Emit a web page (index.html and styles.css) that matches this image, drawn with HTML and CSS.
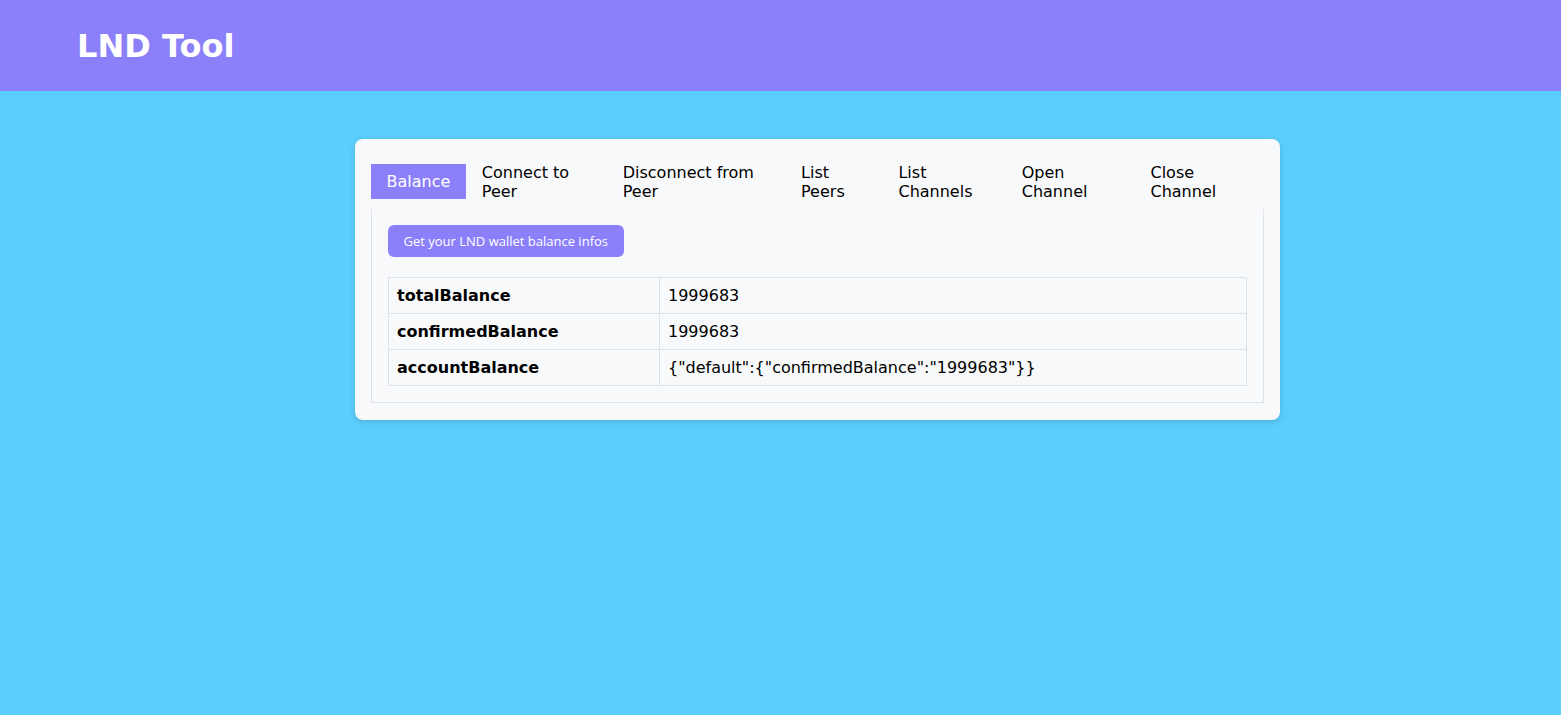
FILE: index.html
```html
<!DOCTYPE html>
<html>
<head>
<meta charset="utf-8">
<link rel="stylesheet" href="styles.css">
</head>
<body>
<header class="topbar"><h1 class="brand">LND Tool</h1></header>
<main class="page">
  <section class="card">
    <ul class="tabs">
      <li class="tab active">Balance</li>
      <li class="tab">Connect to Peer</li>
      <li class="tab">Disconnect from Peer</li>
      <li class="tab">List Peers</li>
      <li class="tab">List Channels</li>
      <li class="tab">Open Channel</li>
      <li class="tab">Close Channel</li>
    </ul>
    <div class="panel">
      <button class="btn">Get your LND wallet balance infos</button>
      <table class="info">
        <colgroup><col class="c-key"><col></colgroup>
        <tr><th>totalBalance</th><td>1999683</td></tr>
        <tr><th>confirmedBalance</th><td>1999683</td></tr>
        <tr><th>accountBalance</th><td>{"default":{"confirmedBalance":"1999683"}}</td></tr>
      </table>
    </div>
  </section>
</main>
</body>
</html>
```
FILE: styles.css
```css
* { box-sizing: border-box; }
html, body { margin: 0; padding: 0; }
body {
  background: #5bcefe;
  font-family: "DejaVu Sans", sans-serif;
  color: #000;
  min-height: 715px;
}
.topbar {
  background: #8c80fa;
  height: 91px;
  display: flex;
  align-items: center;
  padding-left: 77px;
}
.brand {
  margin: 0;
  color: #fff;
  font-size: 32px;
  font-weight: bold;
}
.page {
  padding: 48px 0 0 355px;
}
.card {
  width: 925px;
  background: #f8f9fa;
  border-radius: 8px;
  box-shadow: 0 2px 6px rgba(0,0,0,0.15);
  padding: 15px 16px 17px;
}
.tabs {
  list-style: none;
  margin: 0 0 1px;
  padding: 0;
  display: flex;
  align-items: center;
}
.tab {
  padding: 9px 16px 7px;
  font-size: 16px;
  line-height: 19px;
  color: #000;
}
.tab.active {
  padding: 8px 15.5px;
  background: #8c80fa;
  color: #fff;
}
.panel {
  border: 1px solid #dee2e6;
  border-top: none;
  padding: 16px;
}
.btn {
  display: block;
  background: #8c80fa;
  color: #fff;
  border: none;
  border-radius: 6px;
  height: 32px;
  padding: 0 15.5px;
  font-family: "Open Sans", sans-serif;
  font-size: 13px;
  margin-bottom: 20px;
}
.info {
  width: 100%;
  border-collapse: collapse;
  font-size: 16px;
}
.c-key { width: 271px; }
.info th, .info td {
  border: 1px solid #dee2e6;
  padding: 8px;
  height: 36px;
  text-align: left;
  line-height: 19px;
  color: #000;
}
.info th { font-weight: bold; }
```
